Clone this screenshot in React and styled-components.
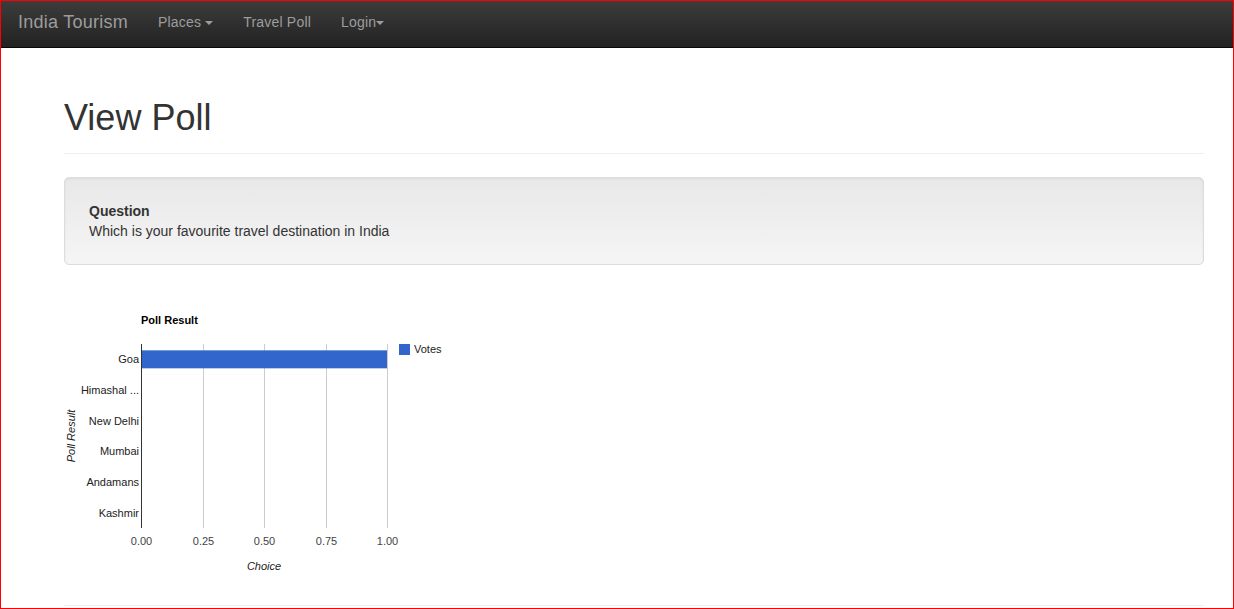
import React from 'react';
import styled, { createGlobalStyle } from 'styled-components';

const GlobalStyle = createGlobalStyle`
  html, body {
    margin: 0;
    padding: 0;
    background: #fff;
  }
  body {
    font-family: "Liberation Sans", Arial, sans-serif;
    font-size: 14px;
    line-height: 20px;
    color: #333;
  }
`;

const Frame = styled.div`
  box-sizing: border-box;
  width: 1234px;
  height: 609px;
  border: 1px solid #f00;
  overflow: hidden;
`;

const NavBar = styled.nav`
  display: flex;
  align-items: flex-start;
  height: 46px;
  background-image: linear-gradient(to bottom, #3c3c3c 0, #222 100%);
  border-bottom: 1px solid #080808;
`;

const Brand = styled.a`
  padding: 11px 15px 15px 17px;
  font-size: 18px;
  line-height: 20px;
  letter-spacing: 0.25px;
  color: #9d9d9d;
  text-decoration: none;
`;

const NavItem = styled.a`
  display: flex;
  align-items: center;
  gap: ${(p) => (p.$tight ? '0' : '4px')};
  padding: 11px 15px 15px;
  font-size: 14px;
  line-height: 20px;
  letter-spacing: 0.2px;
  color: #9d9d9d;
  text-decoration: none;
`;

const Caret = styled.span`
  display: inline-block;
  width: 0;
  height: 0;
  margin-top: 2px;
  border-top: 4px solid #9d9d9d;
  border-left: 4px solid transparent;
  border-right: 4px solid transparent;
`;

const Container = styled.main`
  padding: 0 29px 0 63px;
`;

const PageHeader = styled.div`
  margin-top: 50px;
  padding-bottom: 15px;
  border-bottom: 1px solid #eee;
`;

const Title = styled.h1`
  margin: 0;
  font-size: 36px;
  line-height: 40px;
  font-weight: 500;
  color: #333;
`;

const Well = styled.div`
  margin-top: 23px;
  padding: 23px 24px 23px;
  border: 1px solid #dcdcdc;
  border-radius: 5px;
  background-image: linear-gradient(to bottom, #e8e8e8 0, #f5f5f5 100%);
  box-shadow: inset 0 1px 3px rgba(0, 0, 0, 0.05), 0 1px 0 rgba(255, 255, 255, 0.1);
`;

const Label = styled.div`
  font-weight: bold;
`;

const ChartWrap = styled.div`
  margin-top: 35px;
  height: 285px;
  svg {
    display: block;
    font-family: "Liberation Sans", Arial, sans-serif;
  }
`;

const Rule = styled.hr`
  margin: 20px 0 0;
  border: 0;
  border-top: 1px solid #eee;
`;

const choices = [
  { name: 'Goa', votes: 1 },
  { name: 'Himashal ...', votes: 0 },
  { name: 'New Delhi', votes: 0 },
  { name: 'Mumbai', votes: 0 },
  { name: 'Andamans', votes: 0 },
  { name: 'Kashmir', votes: 0 },
];

const ticks = ['0.00', '0.25', '0.50', '0.75', '1.00'];

const PollChart = () => {
  const left = 77;
  const right = 323;
  const top = 44;
  const bottom = 228;
  const rowH = (bottom - top) / choices.length;
  const w = right - left;

  return (
    <svg width="400" height="285" viewBox="0 0 400 285">
      <text x={left} y="24" fontSize="11" fontWeight="bold" fill="#000">Poll Result</text>

      {ticks.map((t, i) => {
        const x = Math.round(left + (w * i) / 4) + 0.5;
        return (
          <g key={t}>
            {i > 0 && <line x1={x} x2={x} y1={top} y2={bottom} stroke="#ccc" strokeWidth="1" />}
            <text x={x} y="245" fontSize="11" fill="#444" textAnchor="middle">{t}</text>
          </g>
        );
      })}

      {choices.map((c, i) => {
        const cy = top + rowH * i + rowH / 2;
        return (
          <g key={c.name}>
            {c.votes > 0 && (
              <rect x={left} y={cy - 9} width={w * c.votes} height="18" fill="#3366cc" />
            )}
            <text x={left - 2} y={cy + 4} fontSize="11" fill="#222" textAnchor="end">{c.name}</text>
          </g>
        );
      })}

      <line x1={left + 0.5} x2={left + 0.5} y1={top} y2={bottom} stroke="#333" strokeWidth="1" />

      <rect x="335" y="44" width="11" height="11" fill="#3366cc" />
      <text x="350" y="53" fontSize="11" fill="#222">Votes</text>

      <text x={(left + right) / 2} y="270" fontSize="11" fontStyle="italic" fill="#222" textAnchor="middle">Choice</text>
      <text
        x="11"
        y={(top + bottom) / 2}
        fontSize="11"
        fontStyle="italic"
        fill="#222"
        textAnchor="middle"
        transform={`rotate(-90 11 ${(top + bottom) / 2})`}
      >
        Poll Result
      </text>
    </svg>
  );
};

const App = () => (
  <Frame>
    <GlobalStyle />
    <NavBar>
      <Brand href="#">India Tourism</Brand>
      <NavItem href="#">Places <Caret /></NavItem>
      <NavItem href="#">Travel Poll</NavItem>
      <NavItem href="#" $tight>Login<Caret /></NavItem>
    </NavBar>
    <Container>
      <PageHeader>
        <Title>View Poll</Title>
      </PageHeader>
      <Well>
        <Label>Question</Label>
        <div>Which is your favourite travel destination in India</div>
      </Well>
      <ChartWrap>
        <PollChart />
      </ChartWrap>
      <Rule />
    </Container>
  </Frame>
);

export default App;
